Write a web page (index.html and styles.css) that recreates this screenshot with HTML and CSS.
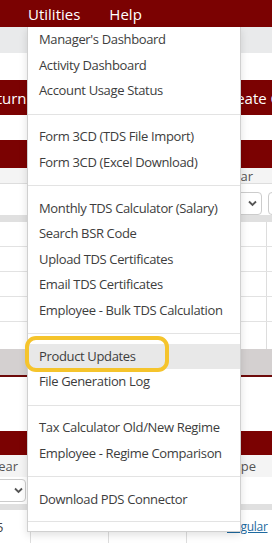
FILE: index.html
```html
<!DOCTYPE html>
<html lang="en">
<head>
    <meta charset="UTF-8">
    <meta name="viewport" content="width=device-width, initial-scale=1.0">
    <title>Utilities menu</title>
    <link rel="stylesheet" href="styles.css">
</head>
<body>
    <div class="page">
        <nav class="topbar">
            <a href="#" class="top-link">Utilities</a>
            <a href="#" class="top-link">Help</a>
        </nav>
        <div class="crumb"></div>
        <div class="gap-27"></div>
        <div class="actions">
            <span class="btn-left">Return</span>
            <span class="btn-right">Create C</span>
        </div>
        <div class="gap-25"></div>

        <div class="panel-head"></div>
        <div class="thead thead-top"><span class="th-right">Year</span></div>
        <div class="filters filters-top">
            <span class="select select-right"><svg class="chev" width="9" height="7" viewBox="0 0 9 7"><path d="M1 1.5 4.5 5 8 1.5" fill="none" stroke="#555" stroke-width="1.8"/></svg></span>
            <span class="select select-next"></span>
        </div>
        <div class="bar"></div>
        <div class="trow"><span class="col-line"></span></div>
        <div class="trow"><span class="col-line"></span></div>
        <div class="trow"><span class="col-line"></span></div>
        <div class="trow"><span class="col-line"></span></div>
        <div class="trow trow-short"><span class="col-line"></span></div>
        <div class="foot-band"></div>
        <div class="gap-54"></div>

        <div class="panel-head panel-head-2"></div>
        <div class="thead thead-bottom">
            <span class="th-left">Year</span>
            <span class="th-type">Type</span>
        </div>
        <div class="filters filters-bottom">
            <span class="select select-left"><svg class="chev" width="9" height="7" viewBox="0 0 9 7"><path d="M1 1.5 4.5 5 8 1.5" fill="none" stroke="#555" stroke-width="1.8"/></svg></span>
        </div>
        <div class="bar bar-thin"></div>
        <div class="data-row">
            <span class="cell cell-num"><span class="num">5</span></span>
            <span class="cell cell-mid"></span>
            <span class="cell cell-mid"></span>
            <span class="cell cell-wide"></span>
            <span class="cell cell-link"><a href="#">Regular</a></span>
        </div>
    </div>

    <ul class="dropdown">
        <li><a href="#">Manager's Dashboard</a></li>
        <li><a href="#">Activity Dashboard</a></li>
        <li><a href="#">Account Usage Status</a></li>
        <li class="divider"></li>
        <li><a href="#">Form 3CD (TDS File Import)</a></li>
        <li><a href="#">Form 3CD (Excel Download)</a></li>
        <li class="divider"></li>
        <li><a href="#">Monthly TDS Calculator (Salary)</a></li>
        <li><a href="#">Search BSR Code</a></li>
        <li><a href="#">Upload TDS Certificates</a></li>
        <li><a href="#">Email TDS Certificates</a></li>
        <li><a href="#">Employee - Bulk TDS Calculation</a></li>
        <li class="divider"></li>
        <li class="active"><a href="#">Product Updates</a></li>
        <li><a href="#">File Generation Log</a></li>
        <li class="divider"></li>
        <li><a href="#">Tax Calculator Old/New Regime</a></li>
        <li><a href="#">Employee - Regime Comparison</a></li>
        <li class="divider"></li>
        <li><a href="#">Download PDS Connector</a></li>
        <li class="divider"></li>
    </ul>

    <div class="marker"></div>
</body>
</html>
```

FILE: styles.css
```css
* {
    margin: 0;
    padding: 0;
    box-sizing: border-box;
}
body {
    font-family: 'Open Sans', 'Noto Sans', sans-serif;
    color: #333333;
    background-color: #ffffff;
    width: 272px;
    height: 543px;
    overflow: hidden;
    position: relative;
}
.page {
    width: 272px;
}
.topbar {
    height: 27px;
    background-color: #7b0202;
    display: flex;
    align-items: center;
    padding-left: 28px;
    gap: 29px;
}
.top-link {
    color: #ffffff;
    text-decoration: none;
    font-size: 15px;
}
.crumb {
    height: 26px;
    background-color: #e9eaeb;
}
.gap-27 {
    height: 27px;
}
.gap-25 {
    height: 25px;
}
.gap-54 {
    height: 54px;
}
.actions {
    height: 35px;
    background-color: #7b0202;
    display: flex;
    align-items: center;
    justify-content: space-between;
    color: #ffffff;
    font-size: 15px;
    overflow: hidden;
    white-space: nowrap;
}
.btn-left {
    margin-left: -21px;
}
.btn-right {
    margin-right: -8px;
}
.panel-head {
    height: 28px;
    background-color: #7b0202;
}
.panel-head-2 {
    height: 24px;
}
.thead {
    height: 16px;
    background-color: #f4f4f4;
    border-bottom: 1px solid #dddddd;
    font-size: 13px;
    color: #555555;
    display: flex;
    align-items: center;
    white-space: nowrap;
    overflow: hidden;
}
.thead-top {
    justify-content: flex-end;
    padding-right: 8px;
}
.th-right {
    margin-right: 11px;
}
.thead-bottom {
    height: 22px;
    justify-content: space-between;
    border-bottom: none;
}
.th-left {
    margin-left: -9px;
}
.th-type {
    margin-right: 16px;
}
.filters {
    display: flex;
    overflow: hidden;
}
.filters-top {
    height: 31px;
    padding-top: 8px;
    align-items: flex-start;
    justify-content: flex-end;
    gap: 6px;
    margin-right: -26px;
}
.filters-bottom {
    height: 27px;
    padding-top: 2px;
    align-items: flex-start;
}
.select {
    height: 23px;
    border: 1px solid #cccccc;
    border-radius: 4px;
    background-color: #ffffff;
    display: flex;
    align-items: center;
    justify-content: flex-end;
    padding-right: 4px;
    flex-shrink: 0;
}
.select-right {
    width: 50px;
}
.select-next {
    width: 30px;
}
.select-left {
    width: 40px;
    margin-left: -14px;
    padding-right: 2px;
}
.bar {
    height: 7px;
    background-color: #e0e0e0;
}
.bar-thin {
    height: 6px;
}
.trow {
    height: 25px;
    border-bottom: 1px solid #e2e2e2;
    display: flex;
    justify-content: flex-end;
    padding-right: 5px;
}
.trow-short {
    height: 27px;
    border-bottom: none;
}
.col-line {
    width: 1px;
    background-color: #dddddd;
}
.foot-band {
    height: 28px;
    background-color: #d4d0d0;
    border-bottom: 2px solid #6e0a0a;
}
.data-row {
    height: 33px;
    display: flex;
    font-size: 13px;
    color: #444444;
}
.cell {
    display: flex;
    align-items: center;
    border-right: 1px solid #dddddd;
    flex-shrink: 0;
}
.cell-num {
    width: 31px;
    overflow: hidden;
}
.num {
    margin-left: -4px;
}
.cell-mid {
    width: 78px;
}
.cell-wide {
    width: 40px;
    border-right: none;
}
.cell-link {
    border-right: none;
    white-space: nowrap;
}
.cell-link a {
    color: #1e6aa0;
    font-size: 12px;
    letter-spacing: -0.3px;
}
.dropdown {
    position: absolute;
    left: 27px;
    top: 27px;
    width: 214px;
    list-style: none;
    background-color: #ffffff;
    border: 1px solid #d0d0d0;
    border-top: none;
    box-shadow: 0 3px 8px rgba(0, 0, 0, 0.12);
}
.dropdown a {
    display: block;
    padding: 3px 11px;
    line-height: 19.5px;
    font-size: 13px;
    letter-spacing: -0.35px;
    color: #3d3d3d;
    text-decoration: none;
    white-space: nowrap;
}
.dropdown .active a {
    background-color: #e8e8e8;
}
.divider {
    height: 1px;
    margin: 10px 0 9.5px;
    background-color: #e3e3e3;
}
.divider:last-child {
    margin: 9px 0 9px;
}
.marker {
    position: absolute;
    left: 25px;
    top: 336px;
    width: 144px;
    height: 36px;
    border: 4px solid #f5c42c;
    border-radius: 11px;
}
```
